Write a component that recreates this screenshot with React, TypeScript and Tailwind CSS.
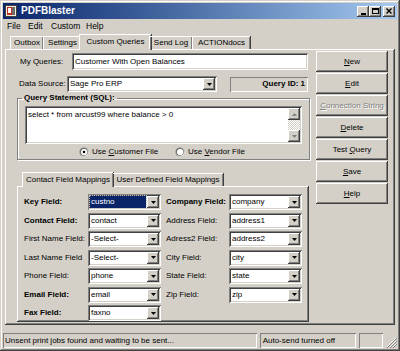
import React from 'react';

const raised =
  'shadow-[inset_-1px_-1px_#404040,inset_1px_1px_#ffffff,inset_-2px_-2px_#808080,inset_2px_2px_#d4d0c8]';
const sunken =
  'shadow-[inset_1px_1px_#808080,inset_-1px_-1px_#ffffff,inset_2px_2px_#404040,inset_-2px_-2px_#d4d0c8]';
const thinSunken = 'shadow-[inset_1px_1px_#808080,inset_-1px_-1px_#ffffff]';

function DownArrow() {
  return (
    <svg width="5" height="3" viewBox="0 0 5 3">
      <path d="M0 0h5L2.5 3z" fill="#000" />
    </svg>
  );
}

function UpArrow() {
  return (
    <svg width="5" height="3" viewBox="0 0 5 3">
      <path d="M0 3h5L2.5 0z" fill="#808080" />
    </svg>
  );
}

function Combo({ value, className, highlight }: { value: string; className: string; highlight?: boolean }) {
  return (
    <div className={`flex h-[16px] bg-white p-[2px] ${sunken} ${className}`}>
      <div
        className={`flex flex-1 items-center pl-[1px] ${
          highlight ? 'bg-[#0a246a] text-white outline-1 outline-dotted outline-[#c0c0c0]' : ''
        }`}
      >
        {value}
      </div>
      <div className={`ml-[1px] flex w-[12px] items-center justify-center bg-[#d4d0c8] ${raised}`}>
        <DownArrow />
      </div>
    </div>
  );
}

function Button({ children, disabled }: { children: React.ReactNode; disabled?: boolean }) {
  return (
    <div
      className={`flex h-[21px] w-[72px] items-center justify-center ${raised} ${
        disabled ? 'text-[#808080] [text-shadow:1px_1px_#ffffff]' : ''
      }`}
    >
      <span>{children}</span>
    </div>
  );
}

function Radio({ checked }: { checked?: boolean }) {
  return (
    <svg width="10" height="10" viewBox="0 0 12 12">
      <circle cx="6" cy="6" r="5.5" fill="#808080" />
      <circle cx="6.5" cy="6.5" r="5" fill="#ffffff" />
      <circle cx="6" cy="6" r="4.5" fill="#404040" />
      <circle cx="6.3" cy="6.3" r="3.8" fill="#d4d0c8" />
      <circle cx="6" cy="6" r="3.6" fill="#ffffff" />
      {checked && <circle cx="6" cy="6" r="1.6" fill="#000" />}
    </svg>
  );
}

const rows: [string, boolean, string, string, boolean, string][] = [
  ['Key Field:', true, 'custno', 'Company Field:', true, 'company'],
  ['Contact Field:', true, 'contact', 'Address Field:', false, 'address1'],
  ['First Name Field:', false, '-Select-', 'Adress2 Field:', false, 'address2'],
  ['Last Name Field', false, '-Select-', 'City Field:', false, 'city'],
  ['Phone Field:', false, 'phone', 'State Field:', false, 'state'],
  ['Email Field:', true, 'email', 'Zip Field:', false, 'zip'],
  ['Fax Field:', true, 'faxno', '', false, ''],
];

const tab =
  'flex h-[13px] items-center justify-center border-l border-t border-white shadow-[inset_-1px_0_#808080,1px_0_#404040]';

export default function App() {
  return (
    <div
      className={`flex h-[351px] w-[400px] flex-col overflow-hidden whitespace-nowrap bg-[#d4d0c8] p-[3px] font-['Liberation_Sans',Arial,sans-serif] text-[8px] leading-none text-black shadow-[inset_-1px_-1px_#404040,inset_1px_1px_#d4d0c8,inset_-2px_-2px_#808080,inset_2px_2px_#ffffff]`}
    >
      {/* title bar */}
      <div className="flex h-[16px] items-center bg-linear-to-r from-[#0a246a] to-[#a6caf0] pl-[2px] pr-[2px]">
        <svg width="12" height="12" viewBox="0 0 12 12" className="mr-[4px]">
          <rect x="0.5" y="0.5" width="11" height="11" fill="#f4f0e0" stroke="#404040" />
          <rect x="2" y="2" width="5" height="8" fill="#c03020" />
          <rect x="3" y="3" width="3" height="5" fill="#ffffff" />
          <path d="M7 2h3v8H7z" fill="#6b6b6b" />
        </svg>
        <span className="text-[10px] font-bold text-white">PDFBlaster</span>
        <div className="ml-auto flex items-center">
          <div className={`flex h-[11px] w-[12px] items-end justify-center bg-[#d4d0c8] pb-[2px] ${raised}`}>
            <div className="h-[2px] w-[5px] bg-black" />
          </div>
          <div className={`flex h-[11px] w-[12px] items-center justify-center bg-[#d4d0c8] ${raised}`}>
            <div className="h-[6px] w-[7px] border border-t-2 border-black" />
          </div>
          <div
            className={`ml-[2px] flex h-[11px] w-[12px] items-center justify-center bg-[#d4d0c8] ${raised}`}
          >
            <svg width="6" height="6" viewBox="0 0 6 6">
              <path d="M0.5 0.5l5 5M5.5 0.5l-5 5" stroke="#000" strokeWidth="1.4" />
            </svg>
          </div>
        </div>
      </div>

      {/* menu */}
      <div className="flex h-[14px] items-center pl-[4px] text-[8.5px]">
        <span className="w-[21px]">File</span>
        <span className="w-[23px]">Edit</span>
        <span className="w-[35px]">Custom</span>
        <span>Help</span>
      </div>

      {/* tabs */}
      <div className="relative z-10 flex h-[16px] items-end pl-[7px]">
        <div className={`${tab} w-[33px]`}>Outbox</div>
        <div className={`${tab} w-[38px]`}>Settings</div>
        <div className="-mx-[2px] mb-[-1px] flex h-[16px] w-[72px] items-center justify-center border-l border-t border-white bg-[#d4d0c8] pb-[1px] shadow-[inset_-1px_0_#808080,1px_0_#404040]">
          Custom Queries
        </div>
        <div className={`${tab} w-[43px]`}>Send Log</div>
        <div className={`${tab} w-[58px]`}>ACTIONdocs</div>
      </div>

      {/* tab panel */}
      <div className={`mx-[2px] flex h-[276px] ${raised}`}>
        <div className="ml-[12px] flex w-[292px] flex-col">
          <div className="mt-[4px] flex items-center">
            <span className="w-[55px] pl-[3px]">My Queries:</span>
            <div className={`flex h-[17px] w-[236px] items-center bg-white pl-[3px] ${sunken}`}>
              Customer With Open Balances
            </div>
          </div>
          <div className="mt-[6px] flex items-center">
            <span className="w-[50px] pl-[2px]">Data Source:</span>
            <Combo value="Sage Pro ERP" className="w-[150px]" />
            <div
              className={`ml-[13px] flex h-[15px] w-[78px] items-center justify-end pr-[3px] font-bold ${thinSunken}`}
            >
              Query ID: 1
            </div>
          </div>

          <fieldset className="mt-[2px] h-[66px] w-[291px] border border-[#808080] px-[7px] shadow-[inset_1px_1px_#ffffff,1px_1px_#ffffff]">
            <legend className="ml-[-3px] px-[2px] font-bold">Query Statement (SQL):</legend>
            <div className={`mt-[4px] flex h-[38px] w-[277px] bg-white p-[2px] ${sunken}`}>
              <div className="flex-1 pl-[1px] pt-[3px]">select * from arcust99 where balance &gt; 0</div>
              <div className="flex w-[12px] flex-col">
                <div className={`flex h-[12px] items-center justify-center bg-[#d4d0c8] ${raised}`}>
                  <UpArrow />
                </div>
                <div className="flex-1 bg-[repeating-conic-gradient(#d4d0c8_0_25%,#ffffff_0_50%)] bg-[length:2px_2px]" />
                <div className={`flex h-[12px] items-center justify-center bg-[#d4d0c8] ${raised}`}>
                  <svg width="5" height="3" viewBox="0 0 5 3">
                    <path d="M0 0h5L2.5 3z" fill="#808080" />
                  </svg>
                </div>
              </div>
            </div>
            <div className="mt-[3px] flex items-center pl-[54px]">
              <Radio checked />
              <span className="ml-[3px] w-[83px]">
                Use <u>C</u>ustomer File
              </span>
              <Radio />
              <span className="ml-[3px]">
                Use <u>V</u>endor File
              </span>
            </div>
          </fieldset>

          {/* sub tabs */}
          <div className="relative z-10 mt-[11px] flex h-[15px] items-end pl-[5px]">
            <div className="mb-[-1px] flex h-[15px] w-[91px] items-center justify-center border-l border-t border-white bg-[#d4d0c8] shadow-[inset_-1px_0_#808080,1px_0_#404040]">
              Contact Field Mappings
            </div>
            <div className="flex h-[13px] w-[110px] items-center justify-center border-t border-white shadow-[inset_-1px_0_#808080,1px_0_#404040]">
              User Defined Field Mappings
            </div>
          </div>
          <div className={`flex h-[136px] w-[292px] flex-col gap-[2.5px] pl-[7px] pt-[8px] ${raised}`}>
            {rows.map(([l1, b1, v1, l2, b2, v2]) => (
              <div key={l1} className="flex h-[16px] items-center">
                <span className={`w-[64px] ${b1 ? 'font-bold' : ''}`}>{l1}</span>
                <Combo value={v1} className="w-[73px]" highlight={v1 === 'custno'} />
                {l2 && (
                  <>
                    <span className={`ml-[5px] w-[63px] ${b2 ? 'font-bold' : ''}`}>{l2}</span>
                    <Combo value={v2} className="w-[73px]" />
                  </>
                )}
              </div>
            ))}
          </div>
        </div>

        {/* buttons */}
        <div className="ml-[7px] mt-[2px] flex flex-col gap-[1px]">
          <Button>
            <u>N</u>ew
          </Button>
          <Button>
            <u>E</u>dit
          </Button>
          <Button disabled>
            <u>C</u>onnection String
          </Button>
          <Button>
            <u>D</u>elete
          </Button>
          <Button>
            Test <u>Q</u>uery
          </Button>
          <Button>
            <u>S</u>ave
          </Button>
          <Button>
            <u>H</u>elp
          </Button>
        </div>
      </div>

      {/* status bar */}
      <div className="mt-[8px] flex h-[15px] gap-[3px]">
        <div className={`flex w-[255px] items-center pl-[2px] ${thinSunken}`}>
          Unsent print jobs found and waiting to be sent...
        </div>
        <div className={`flex w-[97px] items-center pl-[3px] ${thinSunken}`}>Auto-send turned off</div>
        <div className={`w-[24px] ${thinSunken}`} />
        <div className="flex flex-1 items-end justify-end">
          <svg width="11" height="11" viewBox="0 0 11 11">
            <path d="M10 1L1 10M10 4L4 10M10 7L7 10" stroke="#ffffff" strokeWidth="1" />
            <path d="M11 1L1 11M11 4L4 11M11 7L7 11" stroke="#808080" strokeWidth="1" />
          </svg>
        </div>
      </div>
    </div>
  );
}
